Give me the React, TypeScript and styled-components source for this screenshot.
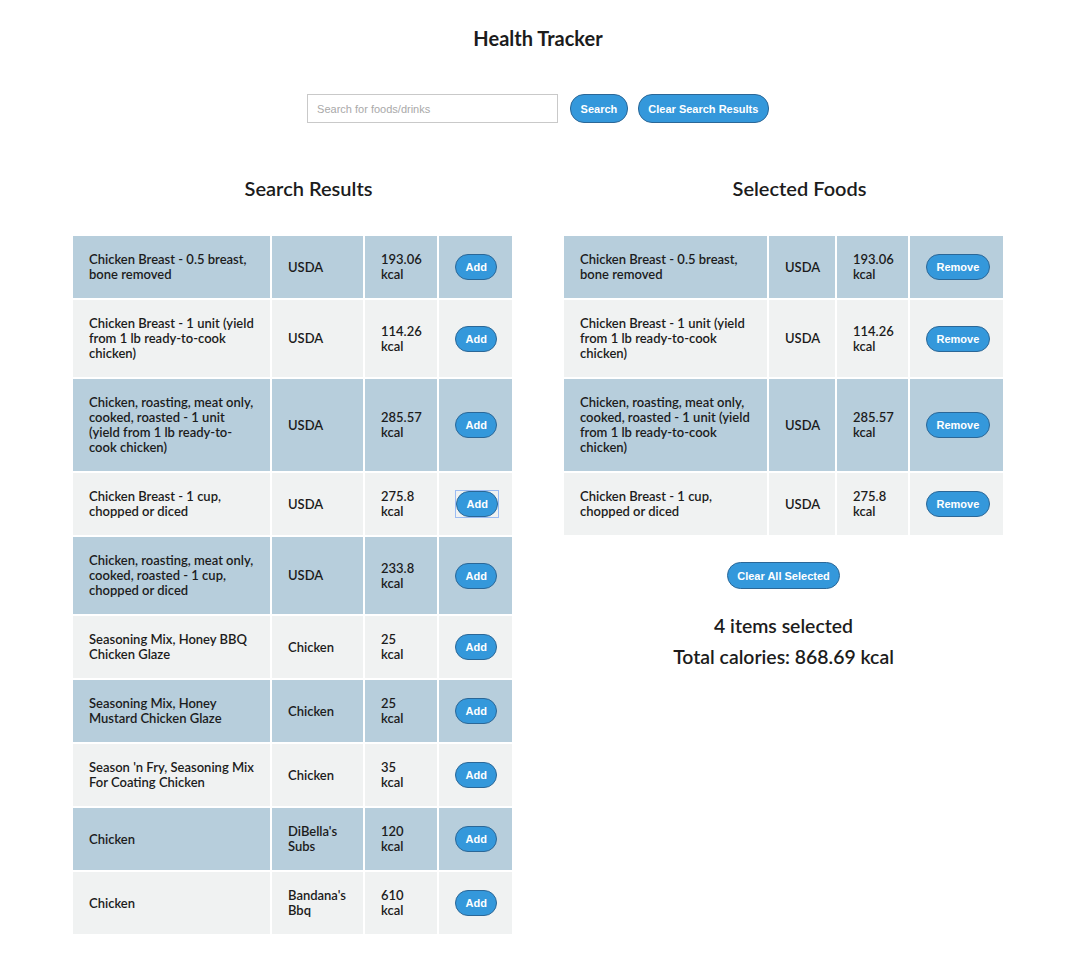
import React from 'react'
import styled, {createGlobalStyle} from 'styled-components'

interface Food {
    name: string
    source: string
    kcal: string
}

const GlobalStyle = createGlobalStyle`
    body {
        margin: 0;
        background: #fff;
        color: #1c1c1c;
        font-family: Lato, 'Open Sans', sans-serif;
    }
`

const Page = styled.div`
    padding: 26px 0 40px;
`

const Header = styled.header`
    padding-right: 7px;
`

const Title = styled.h1`
    margin: 0;
    font-size: 20px;
    line-height: 24px;
    font-weight: 700;
    text-align: center;
`

const SearchBar = styled.div`
    display: flex;
    justify-content: center;
    align-items: center;
    gap: 10px;
    margin-top: 44px;
`

const SearchInput = styled.input`
    box-sizing: border-box;
    width: 251px;
    height: 29px;
    margin-right: 2px;
    padding: 0 9px;
    border: 1px solid #c9c9c9;
    font-family: 'Liberation Sans', Arial, sans-serif;
    font-size: 11px;
    outline: none;

    &::placeholder {
        color: #a9a9a9;
    }
`

const Button = styled.button<{$h?: number}>`
    box-sizing: border-box;
    height: ${p => p.$h ?? 26}px;
    padding: 0 9.5px;
    border: 1.5px solid #2b6797;
    border-radius: 14px;
    background: #3498db;
    color: #fff;
    font-family: 'Liberation Sans', Arial, sans-serif;
    font-size: 11px;
    font-weight: 700;
    cursor: pointer;
`

const FocusRing = styled.span`
    display: inline-block;
    border: 1px solid #9dbcf2;
    line-height: 0;
`

const Columns = styled.div`
    display: grid;
    grid-template-columns: 1fr 1fr;
    column-gap: 20px;
    margin-top: 53px;
    padding: 0 48px 0 73px;
`

const Column = styled.section`
    display: flex;
    flex-direction: column;
`

const Heading = styled.h2`
    margin: 0;
    font-size: 20px;
    line-height: 24px;
    font-weight: 600;
    text-align: center;
`

const TableBlock = styled.div`
    width: 439px;
    display: flex;
    flex-direction: column;
    align-items: center;
`

const Table = styled.table`
    width: 443px;
    margin: 34px -2px 0;
    border-collapse: separate;
    border-spacing: 2px;
    table-layout: fixed;
`

const Row = styled.tr<{$odd: boolean}>`
    background: ${p => (p.$odd ? '#b7cedc' : '#f0f2f2')};
`

const Cell = styled.td`
    padding: 16px;
    font-size: 13px;
    line-height: 15px;
    font-weight: 600;
    vertical-align: middle;
`

const Summary = styled.div`
    margin-top: 21px;
    text-align: center;
`

const SummaryLine = styled.p`
    margin: 0;
    font-size: 19.4px;
    line-height: 31px;
    font-weight: 600;
`

const results: Food[] = [
    {name: 'Chicken Breast - 0.5 breast, bone removed', source: 'USDA', kcal: '193.06'},
    {name: 'Chicken Breast - 1 unit (yield from 1 lb ready-to-cook chicken)', source: 'USDA', kcal: '114.26'},
    {
        name: 'Chicken, roasting, meat only, cooked, roasted - 1 unit (yield from 1 lb ready-to-cook chicken)',
        source: 'USDA',
        kcal: '285.57',
    },
    {name: 'Chicken Breast - 1 cup, chopped or diced', source: 'USDA', kcal: '275.8'},
    {
        name: 'Chicken, roasting, meat only, cooked, roasted - 1 cup, chopped or diced',
        source: 'USDA',
        kcal: '233.8',
    },
    {name: 'Seasoning Mix, Honey BBQ Chicken Glaze', source: 'Chicken', kcal: '25'},
    {name: 'Seasoning Mix, Honey Mustard Chicken Glaze', source: 'Chicken', kcal: '25'},
    {name: "Season 'n Fry, Seasoning Mix For Coating Chicken", source: 'Chicken', kcal: '35'},
    {name: 'Chicken', source: "DiBella's Subs", kcal: '120'},
    {name: 'Chicken', source: "Bandana's Bbq", kcal: '610'},
]

const selected: Food[] = [results[0], results[1], results[2], results[3]]

const FoodTable = ({foods, widths, action, focusIndex}: {
    foods: Food[]
    widths: number[]
    action: string
    focusIndex?: number
}) => (
    <Table>
        <colgroup>
            {widths.map((w, i) => (
                <col key={i} style={{width: w}} />
            ))}
        </colgroup>
        <tbody>
            {foods.map((f, i) => (
                <Row key={i} $odd={i % 2 === 0}>
                    <Cell>{f.name}</Cell>
                    <Cell>{f.source}</Cell>
                    <Cell>
                        {f.kcal}
                        <br />
                        kcal
                    </Cell>
                    <Cell>
                        {i === focusIndex ? (
                            <FocusRing>
                                <Button type="button">{action}</Button>
                            </FocusRing>
                        ) : (
                            <Button type="button">{action}</Button>
                        )}
                    </Cell>
                </Row>
            ))}
        </tbody>
    </Table>
)

export default function App() {
    return (
        <Page>
            <GlobalStyle />
            <Header>
                <Title>Health Tracker</Title>

                <SearchBar>
                    <SearchInput placeholder="Search for foods/drinks" />
                    <Button type="button" $h={29}>
                        Search
                    </Button>
                    <Button type="button" $h={29}>
                        Clear Search Results
                    </Button>
                </SearchBar>
            </Header>

            <Columns>
                <Column>
                    <Heading>Search Results</Heading>
                    <TableBlock>
                        <FoodTable foods={results} widths={[197, 91, 72, 73]} action="Add" focusIndex={3} />
                    </TableBlock>
                </Column>

                <Column>
                    <Heading>Selected Foods</Heading>
                    <TableBlock>
                        <FoodTable foods={selected} widths={[203, 66, 71, 93]} action="Remove" />
                        <Button type="button" $h={27} style={{marginTop: 25}}>
                            Clear All Selected
                        </Button>
                        <Summary>
                            <SummaryLine>4 items selected</SummaryLine>
                            <SummaryLine>Total calories: 868.69 kcal</SummaryLine>
                        </Summary>
                    </TableBlock>
                </Column>
            </Columns>
        </Page>
    )
}
